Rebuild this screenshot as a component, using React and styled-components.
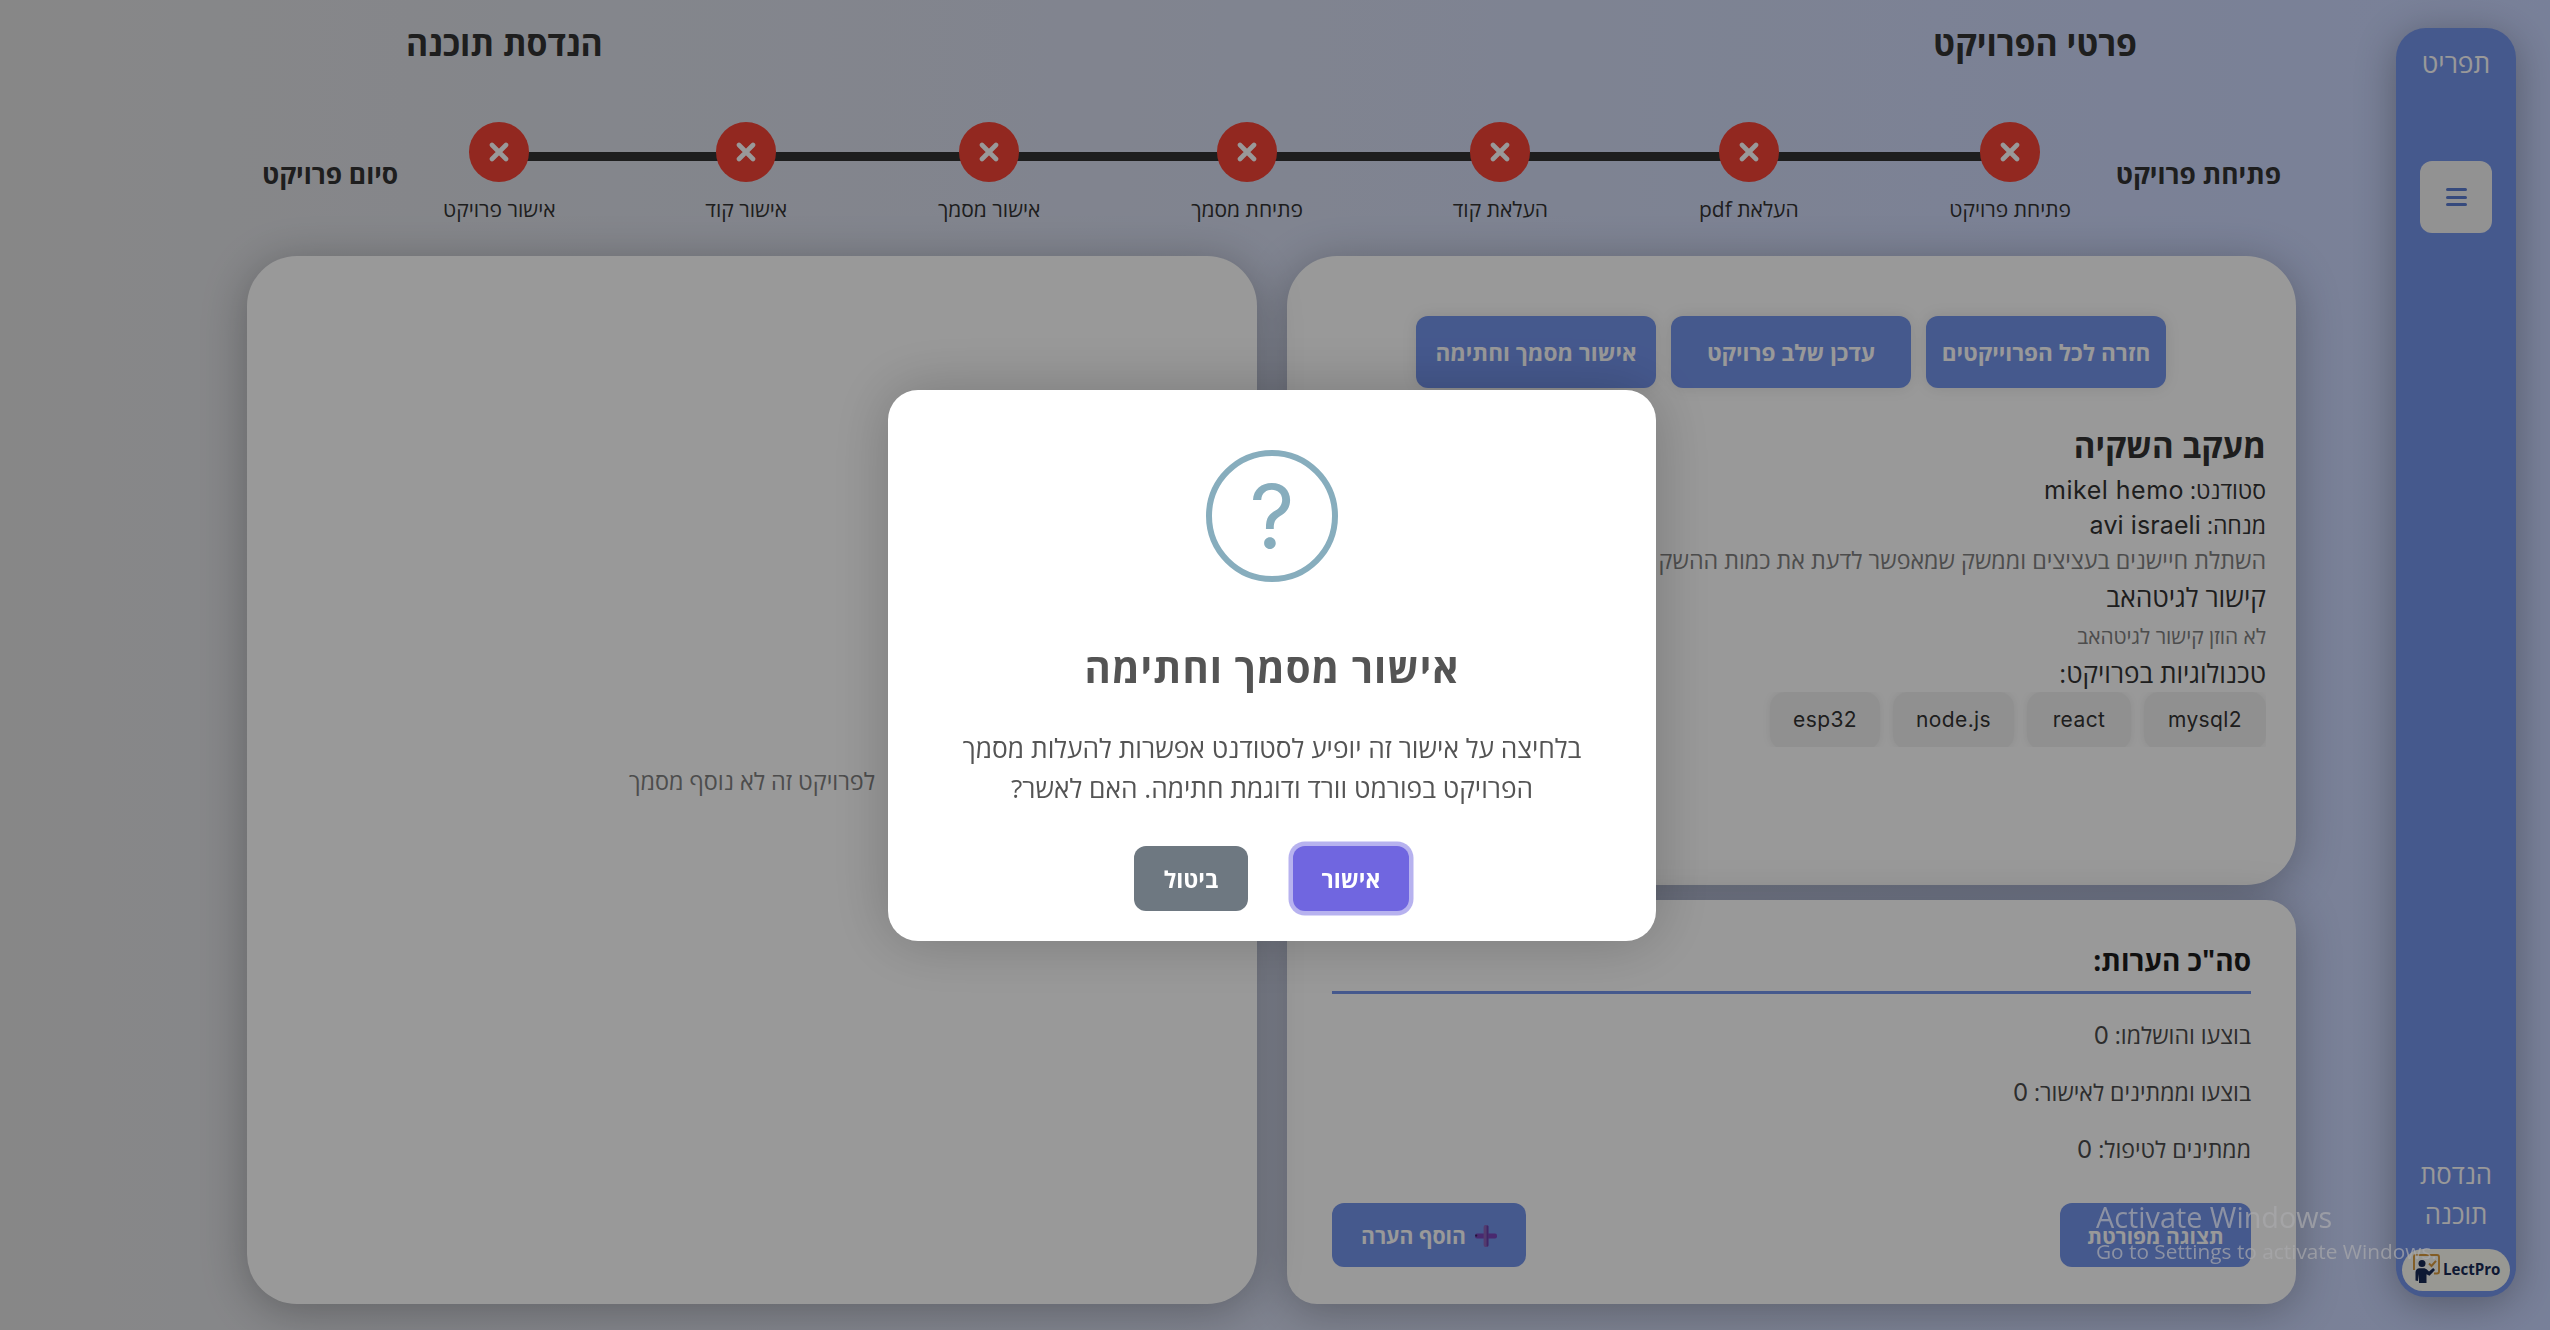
import React from 'react';
import styled, { createGlobalStyle } from 'styled-components';

const blue = '#7494ec';
const ink = '#333';

const GlobalStyle = createGlobalStyle`
  * { box-sizing: border-box; margin: 0; padding: 0; }
  html, body { height: 100%; }
  body {
    overflow: hidden;
    font-family: 'Open Sans', 'Liberation Sans', sans-serif;
    background: linear-gradient(to right, #e2e2e2, #c9d6ff);
  }
`;

const Page = styled.div`
  direction: rtl;
  display: flex;
  width: 2550px;
  height: 1330px;
  padding: 0 34px 0 0;
  color: ${ink};
`;

const Text = styled.span`
  display: block;
  white-space: nowrap;
  font-size: ${(p) => p.$size}px;
  font-weight: ${(p) => p.$weight || 420};
  line-height: ${(p) => p.$line}px;
  letter-spacing: ${(p) => p.$track || 0}px;
  color: ${(p) => p.$color || 'inherit'};
`;

const Latin = styled.bdi`
  font-family: Inter, 'Open Sans', sans-serif;
  font-weight: 400;
  font-size: ${(p) => p.$size}px;
  letter-spacing: ${(p) => p.$track || 0}px;
`;

/* ---------- sidebar ---------- */
const Sidebar = styled.nav`
  display: flex;
  flex-direction: column;
  align-items: center;
  flex: none;
  width: 120px;
  height: 1269px;
  margin-top: 28px;
  padding: 15px 6px 6px;
  border-radius: 30px;
  background: ${blue};
  color: #fff;
  text-align: center;
  box-shadow: 0 7px 40px rgba(0, 0, 0, 0.3);
`;

const MenuButton = styled.button`
  display: grid;
  place-items: center;
  width: 72px;
  height: 72px;
  margin: 78px 0 auto;
  border: 0;
  border-radius: 12px;
  background: #f4f4f4;
`;

const Bars = styled.span`
  display: grid;
  gap: 4.5px;
  i { width: 21px; height: 3px; border-radius: 1.5px; background: #5b7cd0; }
`;

const Logo = styled.div`
  display: flex;
  align-items: center;
  direction: ltr;
  width: 108px;
  height: 42px;
  margin-top: 15px;
  padding: 0 0 2px 9px;
  border-radius: 21px;
  background: #fdfdf6;
  color: #182a56;
`;

/* ---------- header ---------- */
const Main = styled.main`
  display: flex;
  flex-direction: column;
  width: 2049px;
  margin-right: 100px;
`;

const Titles = styled.header`
  display: flex;
  justify-content: space-between;
  padding: 18.5px 159px 0;
`;

const Progress = styled.section`
  display: flex;
  justify-content: space-between;
  height: 102px;
  margin-top: 55.5px;
  padding: 0 15px;
`;

const Edge = styled.div`
  padding-top: 31.5px;
`;

const Track = styled.ol`
  position: relative;
  display: flex;
  gap: 150.4px;
  list-style: none;
  &::before {
    content: '';
    position: absolute;
    top: 30px;
    left: 55px;
    right: 60px;
    height: 9px;
    background: ${ink};
  }
`;

const Step = styled.li`
  position: relative;
  display: flex;
  flex-direction: column;
  align-items: center;
  gap: 12.5px;
  width: ${(p) => p.$width}px;
`;

const Dot = styled.span`
  display: grid;
  place-items: center;
  width: 60px;
  height: 60px;
  border-radius: 50%;
  background: #f44336;
`;

/* ---------- cards ---------- */
const Cards = styled.div`
  display: flex;
  justify-content: space-between;
  height: 1048px;
  margin-top: 32px;
`;

const Column = styled.div`
  display: flex;
  flex-direction: column;
  gap: 15px;
  width: 1009px;
`;

const Card = styled.section`
  display: flex;
  flex-direction: column;
  border-radius: ${(p) => p.$radius}px;
  background: #fff;
  box-shadow: 0 7px 45px rgba(0, 0, 0, 0.28);
`;

const InfoCard = styled(Card)`
  height: 629px;
  padding: 60px 30px 0;
`;

const NotesCard = styled(Card)`
  height: 404px;
  padding: 34.5px 45px 37px;
`;

const DocumentCard = styled(Card)`
  align-items: center;
  justify-content: center;
  width: 1010px;
  padding-top: 2px;
`;

const Actions = styled.div`
  display: flex;
  justify-content: center;
  gap: 15px;
  margin-bottom: 31px;
  padding-right: 1px;
`;

const Button = styled.button`
  display: flex;
  align-items: center;
  justify-content: center;
  gap: ${(p) => p.$gap || 0}px;
  width: ${(p) => p.$width}px;
  height: ${(p) => p.$height}px;
  padding-top: ${(p) => p.$drop || 0}px;
  border: 0;
  border-radius: 12px;
  background: ${(p) => p.$bg || blue};
  color: #fff;
  font-family: inherit;
  box-shadow: ${(p) => p.$shadow || 'none'};
`;

const Tags = styled.div`
  display: flex;
  gap: 13px;
  height: 55px;
  margin-top: 2px;
  overflow: hidden;
`;

const Tag = styled.span`
  flex: none;
  width: ${(p) => p.$width}px;
  height: 58px;
  border-radius: 15px;
  background: #f1f1f1;
  text-align: center;
  direction: ltr;
  line-height: 56px;
  box-shadow: 0 0 8px rgba(0, 0, 0, 0.08);
`;

const NotesTitle = styled.h3`
  padding-bottom: 6.5px;
  margin-bottom: 12.5px;
  border-bottom: 3px solid ${blue};
`;

const NotesActions = styled.div`
  display: flex;
  justify-content: space-between;
  margin-top: auto;
`;

/* ---------- dialog ---------- */
const Overlay = styled.div`
  position: fixed;
  inset: 0;
  display: grid;
  place-items: center;
  padding: 1px 6px 0 0;
  background: rgba(0, 0, 0, 0.4);
  direction: ltr;
`;

const Dialog = styled.div`
  direction: rtl;
  display: flex;
  flex-direction: column;
  align-items: center;
  width: 768px;
  height: 551px;
  padding-top: 60px;
  border-radius: 30px;
  background: #fff;
  color: #545454;
  text-align: center;
  box-shadow: 0 0 60px rgba(0, 0, 0, 0.22);
`;

const Ring = styled.div`
  display: flex;
  justify-content: center;
  width: 132px;
  height: 132px;
  margin-bottom: 58px;
  border: 6px solid #87adbd;
  border-radius: 50%;
  color: #87adbd;
  font-family: Inter, sans-serif;
  font-size: 88px;
  line-height: 120px;
`;

const Message = styled.p`
  margin-top: 31.5px;
`;

const Choices = styled.div`
  display: flex;
  gap: 45px;
  margin-top: 38.5px;
  padding-right: 1px;
`;

/* ---------- desktop notice ---------- */
const Watermark = styled.aside`
  position: fixed;
  left: 2096px;
  top: 1196px;
  direction: ltr;
  color: rgba(167, 167, 170, 0.72);
`;

const Cross = () => (
  <svg width="20" height="20" viewBox="0 0 20 20">
    <path d="M3 3 17 17M17 3 3 17" stroke="#fff" strokeWidth="4.6" strokeLinecap="round" />
  </svg>
);

const Plus = () => (
  <svg width="22" height="22" viewBox="0 0 22 22">
    <rect x="0" y="8.6" width="22" height="4.8" rx="2" fill="#7b45ba" />
    <rect x="8.6" y="0" width="4.8" height="22" rx="2" fill="#8a63b8" />
    <rect x="11.6" y="0.6" width="1.8" height="20.8" rx="0.9" fill="#6a3fa8" />
    <circle cx="1.2" cy="10.6" r="1.1" fill="#3a2560" />
  </svg>
);

const Teacher = () => (
  <svg width="32" height="32" viewBox="0 0 32 32">
    <path d="M3 17V3.5Q3 2 4.5 2H26Q28 2 28 4V18.5Q28 20.5 26 20.5H23" fill="none" stroke="#d99a3c" strokeWidth="1.9" />
    <path d="M18 10.5 20.5 13 25 7.8" fill="none" stroke="#d99a3c" strokeWidth="2" />
    <circle cx="11" cy="10.5" r="3.5" fill="currentColor" />
    <path d="M4.5 27.5V19Q5 15.5 8.5 15.3H13.5Q15.5 15.5 18 18.5L22.2 15 24 17 18.5 22.8 15.5 21.3V30H8V21L7 28Z" fill="currentColor" />
  </svg>
);

const steps = [
  ['פתיחת פרויקט', 120],
  ['העלאת pdf', 102],
  ['העלאת קוד', 94],
  ['פתיחת מסמך', 112],
  ['אישור מסמך', 103],
  ['אישור קוד', 82],
  ['אישור פרויקט', 111],
];

const actions = ['חזרה לכל הפרוייקטים', 'עדכן שלב פרויקט', 'אישור מסמך וחתימה'];

const tags = [['mysql2', 122], ['react', 104], ['node.js', 121], ['esp32', 110]];

const notes = [['בוצעו והושלמו:', 0], ['בוצעו וממתינים לאישור:', 0], ['ממתינים לטיפול:', 0]];

export default function App() {
  return (
    <>
      <GlobalStyle />
      <Page>
        <Sidebar>
          <Text $size={26.4} $line={40} $weight={500}>תפריט</Text>
          <MenuButton aria-label="תפריט"><Bars><i /><i /><i /></Bars></MenuButton>
          <Text $size={25.8} $line={40} $weight={500}>הנדסת</Text>
          <Text $size={25.8} $line={40} $weight={500}>תוכנה</Text>
          <Logo>
            <Teacher />
            <Text $size={15.1} $line={30} $weight={700}>LectPro</Text>
          </Logo>
        </Sidebar>
        <Main>
          <Titles>
            <Text as="h2" $size={33.8} $line={48} $weight={700}>פרטי הפרויקט</Text>
            <Text as="h2" $size={33.8} $line={48} $weight={700}>הנדסת תוכנה</Text>
          </Titles>
          <Progress>
            <Edge><Text $size={26.4} $line={40} $weight={700}>פתיחת פרויקט</Text></Edge>
            <Track>
              {steps.map(([label, width]) => (
                <Step key={label} $width={width}>
                  <Dot><Cross /></Dot>
                  <Text $size={21} $line={30}>{label}</Text>
                </Step>
              ))}
            </Track>
            <Edge><Text $size={26.4} $line={40} $weight={700}>סיום פרויקט</Text></Edge>
          </Progress>
          <Cards>
            <Column>
              <InfoCard $radius={50}>
                <Actions>
                  {actions.map((label) => (
                    <Button key={label} $width={240} $height={72} $drop={2} $shadow="0 0 15px rgba(0,0,0,.1)">
                      <Text $size={22.6} $line={40} $weight={700}>{label}</Text>
                    </Button>
                  ))}
                </Actions>
                <Text $size={33} $line={54} $weight={700}>מעקב השקיה</Text>
                <Text $size={23} $line={35}>סטודנט: <Latin $size={25} $track={0.5}>mikel hemo</Latin></Text>
                <Text $size={23} $line={35}>מנחה: <Latin $size={25} $track={0.1}>avi israeli</Latin></Text>
                <Text $size={23.27} $line={35} $color="#808080">השתלת חיישנים בעציצים וממשק שמאפשר לדעת את כמות ההשק</Text>
                <Text $size={26.4} $line={38}>קישור לגיטהאב</Text>
                <Text $size={20.9} $line={40} $color="#808080">לא הוזן קישור לגיטהאב</Text>
                <Text $size={26.1} $line={34}>טכנולוגיות בפרויקט:</Text>
                <Tags>
                  {tags.map(([label, width]) => (
                    <Tag key={label} $width={width}><Latin $size={21} $track={0.4}>{label}</Latin></Tag>
                  ))}
                </Tags>
              </InfoCard>
              <NotesCard $radius={30}>
                <NotesTitle><Text $size={28} $line={50} $weight={700} $color="#1c1c1c">סה"כ הערות:</Text></NotesTitle>
                {notes.map(([label, count]) => (
                  <Text key={label} $size={23.1} $line={56.3} $color="#4c4c4c">{label} <Latin $size={24}>{count}</Latin></Text>
                ))}
                <NotesActions>
                  <Button $width={191} $height={64} $drop={1}><Text $size={21} $line={30} $weight={700}>תצוגה מפורטת</Text></Button>
                  <Button $width={194} $height={64} $drop={1} $gap={9}><Plus /><Text $size={21.2} $line={30} $weight={700}>הוסף הערה</Text></Button>
                </NotesActions>
              </NotesCard>
            </Column>
            <DocumentCard $radius={50}>
              <Text $size={23.4} $line={36} $color="#808080">לפרויקט זה לא נוסף מסמך</Text>
            </DocumentCard>
          </Cards>
        </Main>
      </Page>
      <Overlay>
        <Dialog role="dialog">
          <Ring>?</Ring>
          <Text as="h2" $size={40} $line={56} $weight={700} $track={1.1}>אישור מסמך וחתימה</Text>
          <Message>
            <Text $size={26.3} $line={40}>בלחיצה על אישור זה יופיע לסטודנט אפשרות להעלות מסמך</Text>
            <Text $size={26.3} $line={40}>הפרויקט בפורמט וורד ודוגמת חתימה. האם לאשר?</Text>
          </Message>
          <Choices>
            <Button $width={116} $height={65} $bg="#7066e0" $shadow="0 0 0 4.5px rgba(112,102,224,.5)">
              <Text $size={23} $line={36} $weight={700}>אישור</Text>
            </Button>
            <Button $width={114} $height={65} $bg="#6e7881">
              <Text $size={23} $line={36} $weight={700}>ביטול</Text>
            </Button>
          </Choices>
        </Dialog>
      </Overlay>
      <Watermark>
        <Text $size={28.8} $line={41} $weight={400}>Activate Windows</Text>
        <Text $size={20.8} $line={28} $weight={400}>Go to Settings to activate Windows.</Text>
      </Watermark>
    </>
  );
}
